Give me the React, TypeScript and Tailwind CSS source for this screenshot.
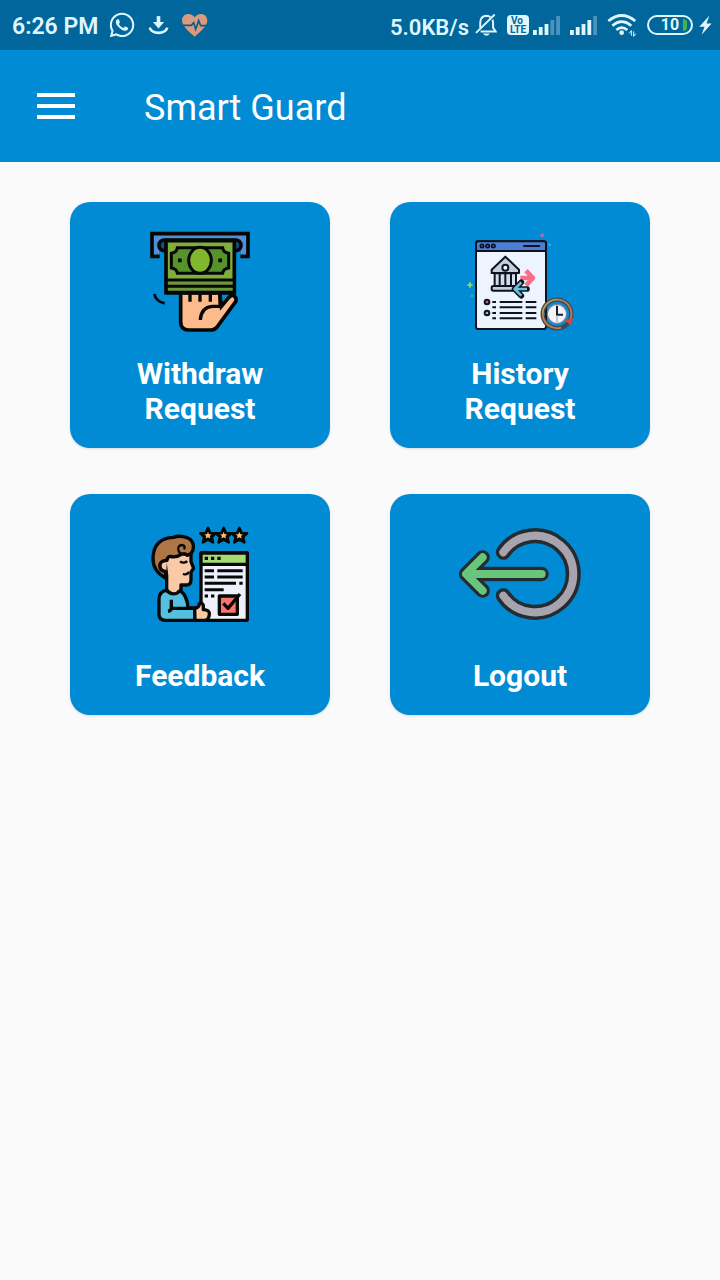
import { ReactNode } from "react";
import { FaWhatsapp } from "react-icons/fa";

function DownloadIcon() {
  return (
    <svg viewBox="442 45 64 60" className="h-5 w-[21px]" fill="none" stroke="#dff6ff" aria-hidden="true">
      <path d="M474 48V70" strokeWidth="11" />
      <path d="M457 66H491L474 86Z" fill="#dff6ff" stroke="none" />
      <path d="M447 83Q453 99 474 99T501 83" strokeWidth="8" />
    </svg>
  );
}

function HeartIcon() {
  return (
    <svg viewBox="541 38 81 75" className="h-[25px] w-[27px]" fill="none" aria-hidden="true">
      <path
        d="M582 51C572 36 545 37 544 60C544 78 566 95 582 109C598 95 620 78 620 60C619 37 592 36 582 51Z"
        fill="#d99a80"
      />
      <path d="M543 75H572L579 67L585 87L594 61L600 76H621" stroke="#0c5d87" strokeWidth="5" />
    </svg>
  );
}

function BellOffIcon() {
  return (
    <svg viewBox="280 40 67 70" className="h-6 w-[22px]" fill="none" stroke="#dff6ff" strokeWidth="6" aria-hidden="true">
      <path d="M296 83V67Q297 48 315 47Q322 47 327 51" />
      <path d="M333 59Q335 63 335 68V83L343 95H297" />
      <path d="M283 99L340 43" />
      <path d="M304 101H325Q321 108 315 108T304 101Z" fill="#dff6ff" stroke="none" />
    </svg>
  );
}

function SignalIcon({ level }: { level: number }) {
  const bars = [5, 8, 11, 15, 19];

  return (
    <svg viewBox="0 0 27 20" className="h-5 w-[27px]" aria-hidden="true">
      {bars.map((bar, i) => (
        <rect
          key={bar}
          x={i * 5.8}
          y={20 - bar}
          width="3.8"
          height={bar}
          fill={i < level ? "#dff6ff" : "#4b93bd"}
        />
      ))}
    </svg>
  );
}

function WifiIcon() {
  return (
    <svg viewBox="201 43 90 69" className="h-[23px] w-[30px]" fill="none" stroke="#dff6ff" aria-hidden="true">
      <path d="M205 64Q245 31 286 64" strokeWidth="8" />
      <path d="M217 78Q245 54 274 78" strokeWidth="8" />
      <path d="M229 91Q245 77 262 91" strokeWidth="8" />
      <circle cx="245" cy="99" r="7" fill="#dff6ff" stroke="none" />
      <path d="M274 108V93L268 101M281 95V110L287 102" strokeWidth="3" />
    </svg>
  );
}

function BoltIcon() {
  return (
    <svg viewBox="478 45 40 60" className="h-5 w-[13px]" aria-hidden="true">
      <path d="M510 46L479 80H495L486 105L517 70H501Z" fill="#dff6ff" />
    </svg>
  );
}

function WithdrawIcon() {
  return (
    <svg viewBox="0 0 360 360" className="size-30" fill="none" stroke="#060606" strokeWidth="11" aria-hidden="true">
      <path d="M36 35H324V103H303V86H57V103H36Z" fill="#4e8fd8" stroke="none" />
      <path d="M59 103H36V35H324V103H301" />
      <rect x="57" y="54" width="246" height="32" rx="16" fill="#14507f" />
      <path d="M78 56H283V212H78Z" fill="#7fae3c" />
      <path d="M84 174H277V207H84Z" fill="#6e963a" stroke="none" />
      <path d="M112 77H248Q250 91 266 94V138Q250 140 248 154H112Q110 140 94 138V94Q110 91 112 77Z" fill="#56932d" strokeWidth="9" />
      <ellipse cx="180" cy="115" rx="34" ry="39" fill="#83b62f" strokeWidth="9" />
      <path d="M114 115H125M235 115H246" />
      <path d="M78 174H283M78 193H283" strokeWidth="9" />
      <path
        d="M122 213V300Q122 324 146 324H211Q226 324 234 311L287 239Q292 226 279 220Q272 219 266 227L244 253L239 213Z"
        fill="#fdbb8b"
      />
      <path d="M78 212H283" />
      <path d="M150 214V239M180 214V239M211 214V239M240 214V252M181 294Q183 256 217 253H247" strokeWidth="10" />
      <path d="M43 216Q48 239 74 244" strokeWidth="8" />
    </svg>
  );
}

function HistoryIcon() {
  return (
    <svg viewBox="0 0 360 360" className="size-30" fill="none" stroke="#0d1420" strokeWidth="6" aria-hidden="true">
      <rect x="48" y="58" width="210" height="263" rx="7" fill="#eef4fe" />
      <path d="M48 87V65Q48 58 55 58H251Q258 58 258 65V87Z" fill="#4c7fd3" />
      <g strokeWidth="5">
        <circle cx="66" cy="72" r="5" />
        <circle cx="83" cy="72" r="5" />
        <circle cx="100" cy="72" r="5" />
      </g>
      <path d="M192 72H238" strokeLinecap="round" />
      <g strokeLinejoin="round">
        <path d="M95 143L136 104L177 143V153H95Z" fill="#c6cedd" />
        <circle cx="136" cy="137" r="9" fill="#eef4fe" />
        <path d="M104 154H168V192H104Z" fill="#d5dce9" />
        <path d="M119 154V192M136 154V192M153 154V192" />
        <rect x="95" y="192" width="84" height="14" rx="5" fill="#c6cedd" />
      </g>
      <path d="M181 168H214M198 146L219 168L198 190" stroke="#f86f87" strokeWidth="14" strokeLinejoin="round" />
      <path d="M201 201H168M184 181L164 201L184 221" stroke="#0d1420" strokeWidth="17" strokeLinecap="round" strokeLinejoin="round" />
      <path d="M201 201H168M184 181L164 201L184 221" stroke="#6ebed5" strokeWidth="8" strokeLinejoin="round" />
      <circle cx="81" cy="240" r="7" fill="#cb6173" />
      <circle cx="81" cy="273" r="7" fill="#8eb5e3" />
      <path d="M97 240H108M119 240H187M197 240H229M97 256H108M119 256H187M197 256H229M97 273H108M119 273H187M197 273H229M97 289H108M119 289H187M197 289H229" />
      <circle cx="291" cy="276" r="43" stroke="#3e4b5e" strokeWidth="13" />
      <path d="M303 317A43 43 0 1 1 331 292" stroke="#c8814a" strokeWidth="5" />
      <path d="M248 276A43 43 0 0 1 291 233" stroke="#b6a447" strokeWidth="4" />
      <path d="M320 296L331 307L336 291Z" fill="#d14b42" stroke="#d14b42" strokeWidth="4" />
      <circle cx="291" cy="276" r="29" fill="#f4f5f8" stroke="#75879e" strokeWidth="4" />
      <path d="M291 251V278H309" stroke="#17202f" strokeWidth="6" />
      <path d="M291 279V301" stroke="#8d98a8" strokeWidth="3" />
      <path d="M30 181V197M22 189H38" stroke="#a9d85e" strokeWidth="5" />
      <path d="M247 34V46M241 40H253" stroke="#c36b9a" strokeWidth="5" />
      <circle cx="36" cy="221" r="3" stroke="#24c8a0" strokeWidth="3" />
      <circle cx="269" cy="68" r="2" stroke="#86cfff" strokeWidth="2" />
    </svg>
  );
}

function FeedbackIcon() {
  const star = "M0 -22L7 -7L23 -6L11 5L15 21L0 13L-15 21L-11 5L-23 -6L-7 -7Z";

  return (
    <svg viewBox="0 0 360 360" className="size-30" fill="none" stroke="#080808" strokeWidth="10" strokeLinejoin="round" aria-hidden="true">
      {[204, 251, 298].map((x) => (
        <g key={x} transform={`translate(${x} 64)`}>
          <path d={star} fill="#080808" strokeWidth="8" />
          <path d={star} fill="#ffc36b" stroke="none" transform="scale(.46)" />
        </g>
      ))}
      <path d="M80 185V231L109 250L123 231V213H139Q153 213 153 197V174L161 163L153 143V111H75V143Z" fill="#fac9a5" />
      <path
        d="M77 192Q38 171 39 132Q41 73 100 70Q119 63 141 71Q162 79 160 101Q159 119 142 124Q135 117 126 120Q107 132 92 127Q82 127 81 139Q58 142 60 158Q61 171 77 172Z"
        fill="#ae7547"
      />
      <path d="M81 139Q58 140 60 157Q62 172 79 172" fill="#fac9a5" />
      <path d="M142 121Q119 124 115 108Q113 94 126 93Q138 95 132 106" strokeWidth="7" />
      <path d="M120 142Q130 150 142 142M129 179Q140 185 147 174" strokeWidth="7" />
      <path d="M80 229Q57 231 57 257V302Q58 319 76 319H165V282H144Q142 246 121 230Q99 246 80 229Z" fill="#54bfdf" />
      <path d="M80 229Q99 250 121 230" fill="#fac9a5" />
      <path d="M94 257V283H165M94 282Q93 291 84 292" />
      <rect x="183" y="117" width="139" height="202" rx="3" fill="#eff1fa" />
      <path d="M183 117H322V151H183Z" fill="#a5dc72" />
      <path d="M194 133H204M213 133H223M232 133H242" />
      <path d="M194 170H222M232 170H308M194 189H222M232 189H308M194 208H288M298 208H308M194 227H251M194 246H204M213 246H223" strokeWidth="9" />
      <rect x="238" y="246" width="54" height="55" fill="#fb7468" />
      <path d="M250 268L264 283L300 240" />
      <path d="M164 283Q178 280 178 269Q184 263 190 274V287Q210 288 208 302Q206 319 193 319H165Z" fill="#fac9a5" />
    </svg>
  );
}

function LogoutIcon() {
  const ring = "M160 115A115 115 0 1 1 160 245";
  const arrow = "M275 180H50M98 130L48 180L98 230";

  return (
    <svg viewBox="0 0 420 360" className="h-30 w-35" fill="none" strokeLinecap="round" strokeLinejoin="round" aria-hidden="true">
      <path d={ring} stroke="#242c32" strokeWidth="45" />
      <path d={ring} stroke="#a7a4b0" strokeWidth="24" />
      <path d={arrow} stroke="#242c32" strokeWidth="43" />
      <path d={arrow} stroke="#69c47c" strokeWidth="24" />
    </svg>
  );
}

function StatusBar() {
  return (
    <div className="flex h-[50px] items-center bg-[#01669b] pr-2 pl-3 text-[23px] font-semibold text-[#dff6ff]">
      <span className="pt-1">6:26 PM</span>
      <div className="ml-2.5 flex items-center gap-3">
        <FaWhatsapp className="size-7" />
        <DownloadIcon />
        <HeartIcon />
      </div>

      <div className="ml-auto flex items-center">
        <span className="mr-1.5 pt-1 text-[22px]">5.0KB/s</span>
        <BellOffIcon />
        <span className="mr-1 ml-2.5 flex h-5 w-[22px] flex-col items-center justify-center rounded-sm bg-[#dff6ff] text-[10px] leading-[9px] font-bold text-[#01669b]">
          <span className="self-start pl-1">Vo</span>
          <span>LTE</span>
        </span>
        <div className="mr-2.5 flex gap-2.5">
          <SignalIcon level={3} />
          <SignalIcon level={4} />
        </div>
        <WifiIcon />
        <span className="relative mr-1.5 ml-2.5 flex h-5 w-[46px] items-center justify-center overflow-hidden rounded-full border-2 border-[#dff6ff] text-base leading-none font-bold">
          10
          <span className="absolute right-1 h-3 w-1 rounded-r-full bg-[#3fb54a]" />
        </span>
        <BoltIcon />
      </div>
    </div>
  );
}

type TileProps = {
  icon: ReactNode;
  label: string;
  labelClass: string;
};

function Tile({ icon, label, labelClass }: TileProps) {
  return (
    <button
      type="button"
      className="flex flex-col items-center rounded-[20px] bg-[#008bd4] px-10 pt-5 pb-[22px] text-center text-[30px] leading-[35px] font-bold text-white shadow-sm"
    >
      {icon}
      <span className={labelClass}>{label}</span>
    </button>
  );
}

export default function App() {
  return (
    <div className="min-h-screen bg-[#fafafa] font-['Roboto',sans-serif]">
      <StatusBar />

      <header className="flex h-28 items-center bg-[#008bd4] px-9 text-white">
        <button type="button" aria-label="Open menu" className="flex w-10 justify-center">
          <svg viewBox="0 0 38 26" className="h-[26px] w-[38px]" fill="white" aria-hidden="true">
            <path d="M0 0H38V4H0ZM0 11H38V15H0ZM0 22H38V26H0Z" />
          </svg>
        </button>
        <h1 className="ml-17 pt-1 text-[36px]">Smart Guard</h1>
      </header>

      <main className="grid grid-cols-2 gap-x-15 gap-y-[46px] px-[70px] pt-10">
        <Tile icon={<WithdrawIcon />} label="Withdraw Request" labelClass="mt-3.5" />
        <Tile icon={<HistoryIcon />} label="History Request" labelClass="mt-3.5 px-5" />
        <Tile icon={<FeedbackIcon />} label="Feedback" labelClass="mt-6" />
        <Tile icon={<LogoutIcon />} label="Logout" labelClass="mt-6" />
      </main>
    </div>
  );
}
